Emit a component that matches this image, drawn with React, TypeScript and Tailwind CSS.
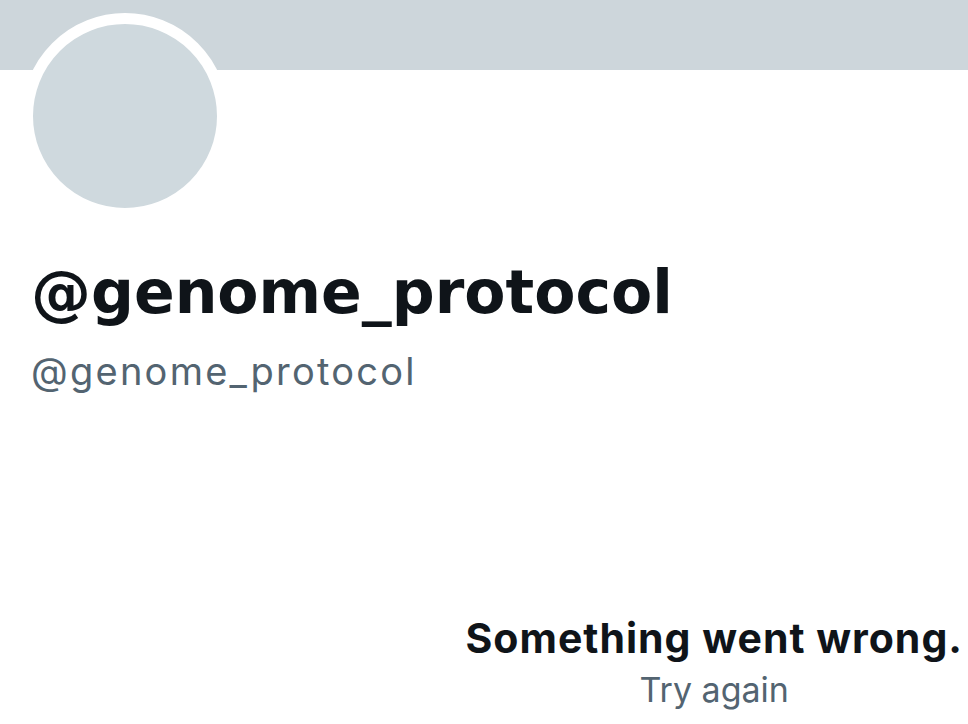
export default function App() {
  return (
    <div className="relative h-[724px] w-[968px] overflow-hidden bg-white font-['Inter',sans-serif] text-[#0f1419]">
      {/* Banner */}
      <div className="h-[70px] w-full bg-[#cdd6db]" />

      {/* Avatar */}
      <div className="ml-[22px] -mt-[57px] h-[206px] w-[206px] rounded-full border-[11px] border-white bg-[#cfd9de]" />

      {/* Names */}
      <div className="mt-[37px] pl-[31px]">
        <h1 className="font-['DejaVu_Sans',sans-serif] text-[60px] font-bold leading-[72px]">@genome_protocol</h1>
        <p className="mt-[19px] text-[38px] font-normal leading-[48px] tracking-[2.25px] text-[#536471]">
          @genome_protocol
        </p>
      </div>

      {/* Error */}
      <div className="mt-[218px] flex justify-end pr-[5px]">
        <div className="text-center">
          <p className="text-[41px] font-bold leading-[50px] tracking-[1px]">Something went wrong.</p>
          <p className="mt-[9px] text-[34px] leading-[36px] text-[#536471]">Try again</p>
        </div>
      </div>
    </div>
  );
}
